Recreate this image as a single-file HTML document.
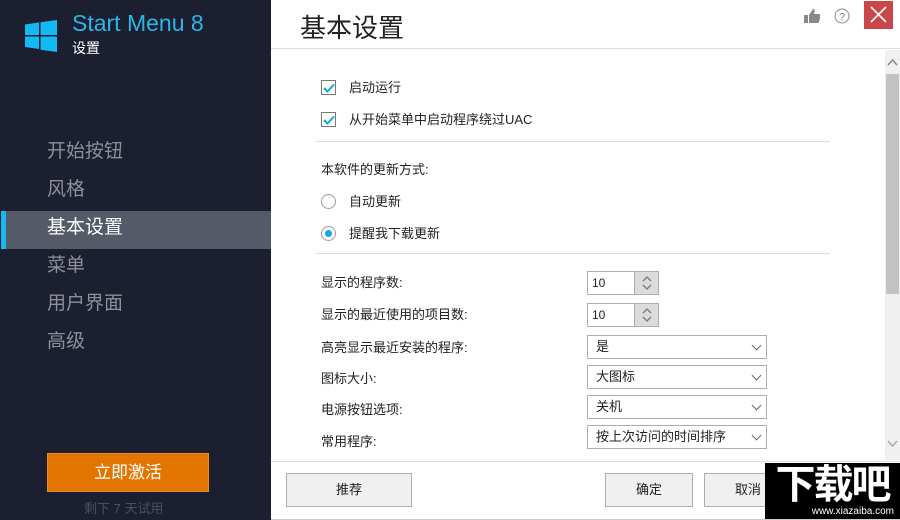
<!DOCTYPE html><html><head><meta charset="utf-8"><style>
*{margin:0;padding:0;box-sizing:border-box}
body{width:900px;height:520px;position:relative;overflow:hidden;background:#fff;font-family:"Liberation Sans","Microsoft YaHei","Noto Sans CJK SC",sans-serif;font-size:13px;color:#222}
.abs{position:absolute}
#side{left:0;top:0;width:271px;height:520px;background:#1b1f2f}
.nav{position:absolute;left:47px;font-size:19px;color:#8c8f99;line-height:38px}
.cb{position:absolute;left:321px;width:15px;height:15px;border:1px solid #777;background:#fff}
.rd{position:absolute;left:321px;width:15px;height:15px;border:1px solid #999;border-radius:50%;background:#fff}
.lbl{position:absolute;font-size:13px;color:#222}
.sel{position:absolute;left:587px;width:180px;height:24px;border:1px solid #adadad;background:#fff;font-size:13px;line-height:22px;padding-left:8px}
.sel:after{content:"";position:absolute;right:6px;top:6px;width:6px;height:6px;border-right:1.5px solid #666;border-bottom:1.5px solid #666;transform:rotate(45deg)}
.spin{position:absolute;left:587px;width:72px;height:24px;border:1px solid #adadad;background:#fff;font-size:12px;line-height:22px;padding-left:4px}
.spin i{position:absolute;right:0;top:0;width:24px;height:22px;background:#dcdcdc;border-left:1px solid #adadad}
.btn{position:absolute;top:473px;height:34px;border:1px solid #adadad;background:#f0f0f0;text-align:center;line-height:32px;font-size:13px}
.hr{position:absolute;height:1px;background:#ddd}
</style></head><body>
<div id="side" class="abs">
<svg class="abs" style="left:25px;top:20px" width="33" height="32" viewBox="0 0 33 32"><path fill="#12b9f2" d="M0 4.5L14 2.5V15H0zM15.5 2.3L32 0V15H15.5zM0 16.5H14V29L0 27zM15.5 16.5H32V32L15.5 29.7z"/></svg>
<div class="abs" style="left:72px;top:10px;font-size:23px;color:#2bb5e8">Start Menu 8</div>
<div class="abs" style="left:72px;top:38px;font-size:14px;color:#fff">设置</div>
<div class="nav" style="top:133px">开始按钮</div>
<div class="nav" style="top:171px">风格</div>
<div class="abs" style="left:1px;top:211px;width:270px;height:38px;background:#555a69"></div>
<div class="abs" style="left:1px;top:211px;width:5px;height:38px;background:#12b9f2"></div>
<div class="nav" style="top:209px;color:#fff">基本设置</div>
<div class="nav" style="top:247px">菜单</div>
<div class="nav" style="top:285px">用户界面</div>
<div class="nav" style="top:323px">高级</div>
<div class="abs" style="left:47px;top:453px;width:162px;height:39px;background:#e27400;border:1px solid #f08a1a;color:#fff;font-size:17px;text-align:center;line-height:37px">立即激活</div>
<div class="abs" style="left:84px;top:498px;font-size:13px;color:#4a4f5e">剩下 7 天试用</div>
</div>
<div class="abs" style="left:300px;top:8px;font-size:26px;color:#222">基本设置</div>
<svg class="abs" style="left:804px;top:8px" width="17" height="16" viewBox="0 0 17 16"><path fill="#888" d="M0 7h4v8H0zM5 7l4-6c2 0 2 2 1 5h5c1.5 0 1.5 2 0.5 2.5 1 .5 1 2-0.2 2.3.8.6.6 2-.5 2.2.5.7 0 2-1 2H5z"/></svg>
<svg class="abs" style="left:834px;top:8px" width="16" height="16" viewBox="0 0 16 16"><circle cx="8" cy="8" r="7" fill="none" stroke="#888" stroke-width="1"/><text x="8" y="12.5" font-size="11" text-anchor="middle" fill="#888" font-family="Liberation Sans">?</text></svg>
<div class="abs" style="left:864px;top:1px;width:29px;height:28px;background:#c9474a"></div>
<svg class="abs" style="left:869px;top:5px" width="19" height="19"><path d="M2 2L17 17M17 2L2 17" stroke="#fff" stroke-width="1.6"/></svg>
<div class="hr" style="left:271px;top:48px;width:629px"></div>
<div class="abs" style="left:885px;top:50px;width:15px;height:410px;background:#f0f0f0"></div>
<div class="abs" style="left:886px;top:74px;width:13px;height:220px;background:#c2c2c2"></div>
<svg class="abs" style="left:887px;top:58px" width="11" height="8"><path d="M1 7L5.5 2L10 7" fill="none" stroke="#888" stroke-width="1.5"/></svg>
<svg class="abs" style="left:887px;top:440px" width="11" height="8"><path d="M1 1L5.5 6L10 1" fill="none" stroke="#aaa" stroke-width="1.5"/></svg>
<div class="cb" style="top:80px"></div><svg class="abs" style="left:323px;top:83px" width="12" height="10"><path d="M1 5L4.5 8.5L11 1.5" fill="none" stroke="#12a8e8" stroke-width="2"/></svg>
<div class="lbl" style="left:349px;top:77px">启动运行</div>
<div class="cb" style="top:112px"></div><svg class="abs" style="left:323px;top:115px" width="12" height="10"><path d="M1 5L4.5 8.5L11 1.5" fill="none" stroke="#12a8e8" stroke-width="2"/></svg>
<div class="lbl" style="left:349px;top:109px">从开始菜单中启动程序绕过UAC</div>
<div class="hr" style="left:316px;top:141px;width:514px"></div>
<div class="lbl" style="left:321px;top:159px">本软件的更新方式:</div>
<div class="rd" style="top:194px"></div>
<div class="lbl" style="left:349px;top:191px">自动更新</div>
<div class="rd" style="top:226px"></div><div class="abs" style="left:325px;top:230px;width:7px;height:7px;border-radius:50%;background:#12a8f0"></div>
<div class="lbl" style="left:349px;top:223px">提醒我下载更新</div>
<div class="hr" style="left:316px;top:253px;width:514px"></div>
<div class="lbl" style="left:321px;top:272px">显示的程序数:</div>
<div class="spin" style="top:271px">10<i><svg width="24" height="22"><path d="M8 9L12 5L16 9M8 13L12 17L16 13" fill="none" stroke="#777" stroke-width="1.3"/></svg></i></div>
<div class="lbl" style="left:321px;top:304px">显示的最近使用的项目数:</div>
<div class="spin" style="top:303px">10<i><svg width="24" height="22"><path d="M8 9L12 5L16 9M8 13L12 17L16 13" fill="none" stroke="#777" stroke-width="1.3"/></svg></i></div>
<div class="lbl" style="left:321px;top:337px">高亮显示最近安装的程序:</div>
<div class="sel" style="top:335px">是</div>
<div class="lbl" style="left:321px;top:368px">图标大小:</div>
<div class="sel" style="top:365px">大图标</div>
<div class="lbl" style="left:321px;top:399px">电源按钮选项:</div>
<div class="sel" style="top:395px">关机</div>
<div class="lbl" style="left:321px;top:431px">常用程序:</div>
<div class="sel" style="top:425px">按上次访问的时间排序</div>
<div class="hr" style="left:271px;top:461px;width:629px"></div>
<div class="btn" style="left:286px;width:126px">推荐</div>
<div class="btn" style="left:605px;width:88px">确定</div>
<div class="btn" style="left:704px;width:88px">取消</div>
<div class="abs" style="left:765px;top:463px;width:135px;height:57px;background:#000;color:#fff;font-size:40px;font-weight:bold;line-height:44px;text-align:center;letter-spacing:-2px">下载吧<div style="font-size:10px;line-height:10px;font-weight:normal;letter-spacing:0;text-align:right;padding-right:6px">www.xiazaiba.com</div></div>
<div class="hr" style="left:271px;top:519px;width:629px;background:#ccc"></div>
</body></html>
